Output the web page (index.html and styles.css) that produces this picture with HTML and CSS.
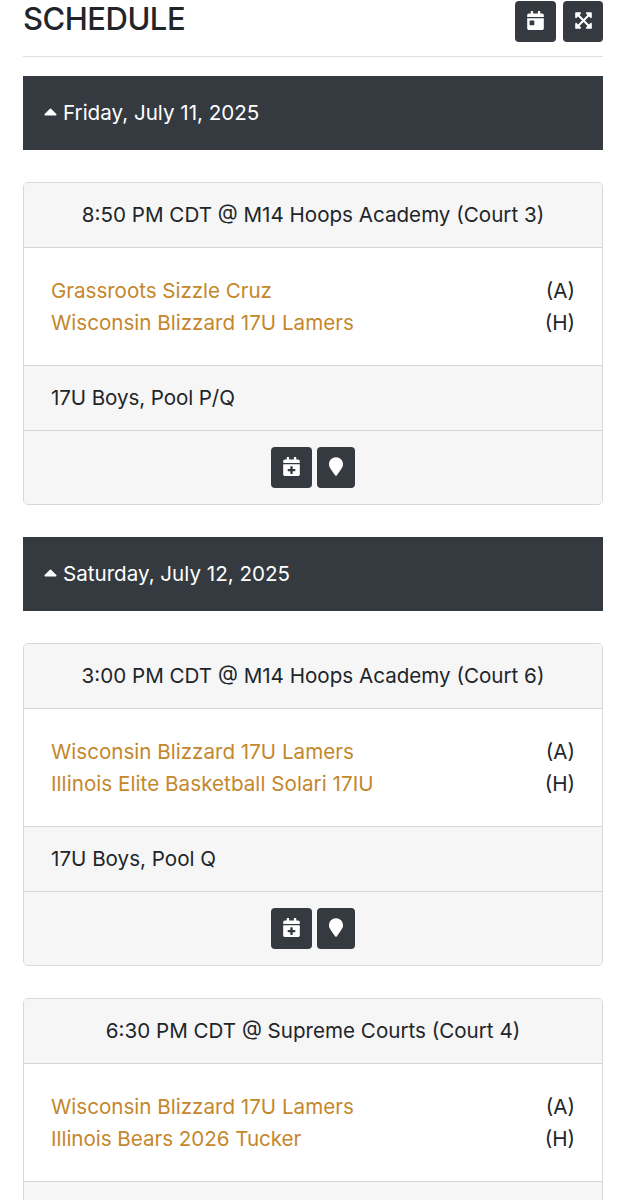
FILE: index.html
```html
<!DOCTYPE html>
<html lang="en">
<head>
<meta charset="utf-8">
<title>Schedule</title>
<link rel="stylesheet" href="styles.css">
</head>
<body>
<svg class="sprite" aria-hidden="true">
  <symbol id="calendar-day" viewBox="0 0 448 512"><path d="M0 464c0 26.500 21.500 48 48 48h352c26.500 0 48-21.500 48-48V192H0v272zm64-192c0-8.800 7.200-16 16-16h96c8.800 0 16 7.200 16 16v96c0 8.800-7.200 16-16 16H80c-8.800 0-16-7.200-16-16v-96zM400 64h-48V16c0-8.800-7.200-16-16-16h-32c-8.800 0-16 7.200-16 16v48H160V16c0-8.800-7.200-16-16-16h-32c-8.800 0-16 7.200-16 16v48H48C21.500 64 0 85.500 0 112v48h448v-48c0-26.500-21.500-48-48-48z"/></symbol>
  <symbol id="expand" viewBox="0 0 448 512"><path d="M448 344v112a23.940 23.940 0 0 1-24 24H312c-21.390 0-32.090-25.900-17-41l36.200-36.200L224 295.600 116.770 402.900 153 439c15.090 15.100 4.390 41-17 41H24a23.940 23.940 0 0 1-24-24V344c0-21.400 25.890-32.100 41-17l36.190 36.200L184.460 256 77.180 148.700 41 185c-15.100 15.100-41 4.400-41-17V56a23.940 23.940 0 0 1 24-24h112c21.390 0 32.090 25.900 17 41l-36.200 36.200L224 216.400l107.230-107.300L295 73c-15.090-15.100-4.390-41 17-41h112a23.940 23.940 0 0 1 24 24v112c0 21.400-25.890 32.100-41 17l-36.190-36.200L263.540 256l107.280 107.300L407 327.100c15.100-15.200 41-4.500 41 16.900z"/></symbol>
  <symbol id="calendar-plus" viewBox="0 0 448 512"><path d="M436 160H12c-6.600 0-12-5.400-12-12v-36c0-26.500 21.500-48 48-48h48V12c0-6.600 5.400-12 12-12h40c6.600 0 12 5.400 12 12v52h128V12c0-6.600 5.400-12 12-12h40c6.600 0 12 5.400 12 12v52h48c26.500 0 48 21.500 48 48v36c0 6.600-5.400 12-12 12zM12 192h424c6.600 0 12 5.400 12 12v260c0 26.500-21.500 48-48 48H48c-26.500 0-48-21.500-48-48V204c0-6.600 5.400-12 12-12zm316 140c0-6.600-5.400-12-12-12h-60v-60c0-6.600-5.400-12-12-12h-40c-6.600 0-12 5.400-12 12v60h-60c-6.600 0-12 5.400-12 12v40c0 6.600 5.400 12 12 12h60v60c0 6.600 5.400 12 12 12h40c6.600 0 12-5.400 12-12v-60h60c6.600 0 12-5.400 12-12v-40z"/></symbol>
  <symbol id="marker" viewBox="0 0 384 512"><path d="M172.268 501.670C26.970 291.031 0 269.413 0 192 0 85.961 85.961 0 192 0s192 85.961 192 192c0 77.413-26.970 99.031-172.268 309.670-9.535 13.774-29.930 13.773-39.464 0z"/></symbol>
  <symbol id="caret-up" viewBox="0 0 320 512"><path d="M288.662 352H31.338c-17.818 0-26.741-21.543-14.142-34.142l128.662-128.662c7.810-7.810 20.474-7.810 28.284 0l128.662 128.662c12.600 12.599 3.676 34.142-14.142 34.142z"/></symbol>
</svg>
<main class="page">
  <header class="top">
    <h1 class="title">SCHEDULE</h1>
    <div class="tools">
      <button class="btn" aria-label="Calendar"><svg class="icon"><use href="#calendar-day"/></svg></button>
      <button class="btn btn-expand" aria-label="Expand"><svg class="icon"><use href="#expand"/></svg></button>
    </div>
  </header>

  <h2 class="date"><svg class="caret"><use href="#caret-up"/></svg><span>Friday, July 11, 2025</span></h2>

  <article class="card">
    <div class="card-header">8:50 PM CDT @ M14 Hoops Academy (Court 3)</div>
    <div class="card-body">
      <div class="team"><a class="name tight">Grassroots Sizzle Cruz</a><span class="side">(A)</span></div>
      <div class="team"><a class="name">Wisconsin Blizzard 17U Lamers</a><span class="side">(H)</span></div>
    </div>
    <div class="card-footer tighter">17U Boys, Pool P/Q</div>
    <div class="card-actions">
      <button class="btn" aria-label="Add to calendar"><svg class="icon"><use href="#calendar-plus"/></svg></button>
      <button class="btn btn-map" aria-label="Map"><svg class="icon icon-marker"><use href="#marker"/></svg></button>
    </div>
  </article>

  <h2 class="date"><svg class="caret"><use href="#caret-up"/></svg><span>Saturday, July 12, 2025</span></h2>

  <article class="card">
    <div class="card-header">3:00 PM CDT @ M14 Hoops Academy (Court 6)</div>
    <div class="card-body">
      <div class="team"><a class="name">Wisconsin Blizzard 17U Lamers</a><span class="side">(A)</span></div>
      <div class="team"><a class="name loose">Illinois Elite Basketball Solari 17IU</a><span class="side">(H)</span></div>
    </div>
    <div class="card-footer">17U Boys, Pool Q</div>
    <div class="card-actions">
      <button class="btn" aria-label="Add to calendar"><svg class="icon"><use href="#calendar-plus"/></svg></button>
      <button class="btn btn-map" aria-label="Map"><svg class="icon icon-marker"><use href="#marker"/></svg></button>
    </div>
  </article>

  <article class="card">
    <div class="card-header">6:30 PM CDT @ Supreme Courts (Court 4)</div>
    <div class="card-body">
      <div class="team"><a class="name">Wisconsin Blizzard 17U Lamers</a><span class="side">(A)</span></div>
      <div class="team"><a class="name tight">Illinois Bears 2026 Tucker</a><span class="side">(H)</span></div>
    </div>
    <div class="card-footer card-cut"></div>
  </article>
</main>
</body>
</html>
```
FILE: styles.css
```css
* { box-sizing: border-box; }

body {
  margin: 0;
  background: #fff;
  color: #212529;
  font: 400 20.6px/32px Inter, "Liberation Sans", sans-serif;
}

.sprite { display: none; }

.page {
  height: 1200px;
  padding: 0 23px;
  overflow: hidden;
}

.top {
  display: flex;
  justify-content: space-between;
  height: 57px;
  padding-top: 1px;
  margin-bottom: 19px;
  border-bottom: 1px solid #dedfe0;
}

.title {
  margin: 0;
  font-size: 31px;
  font-weight: 500;
  line-height: 36px;
  letter-spacing: -0.5px;
}

.tools { display: flex; gap: 7px; }

.btn {
  display: flex;
  align-items: center;
  justify-content: center;
  width: 41px;
  height: 41px;
  padding: 0 0 2px;
  border: 0;
  border-radius: 4px;
  background: #343a40;
}
.btn-expand { width: 40px; }
.btn-map { width: 38px; }

.icon { width: 17px; height: 19px; fill: #fff; }
.icon-marker { width: 14px; }

.date {
  display: flex;
  align-items: center;
  height: 74px;
  margin: 0 0 32px;
  padding-left: 21px;
  background: #343a40;
  color: #fff;
  font-size: 20.6px;
  font-weight: 400;
}

.caret { width: 13px; height: 21px; margin: 0 6px 3px 0; fill: #fff; }

.card {
  margin-bottom: 32px;
  border: 1px solid #d9d9da;
  border-radius: 5px;
  overflow: hidden;
}

.card-header,
.card-footer,
.card-actions { background: #f6f6f7; }

.card-header {
  height: 65px;
  padding-top: 16px;
  border-bottom: 1px solid #d5d5d6;
  text-align: center;
  white-space: nowrap;
}

.card-body { height: 117px; padding: 27px 27px 0; }

.team { display: flex; justify-content: space-between; }

.name { color: #c4872c; }

.tight { letter-spacing: -0.04px; }
.tighter { letter-spacing: -0.1px; }
.loose { letter-spacing: 0.05px; }

.card-footer {
  height: 65px;
  padding: 16px 27px 0;
  border-top: 1px solid #d5d5d6;
}

/* The last card is only visible down to the top of its footer. */
.card-cut { height: 40px; }

.card-actions {
  display: flex;
  justify-content: center;
  gap: 5px;
  height: 74px;
  padding-top: 16px;
  border-top: 1px solid #d5d5d6;
}
```
